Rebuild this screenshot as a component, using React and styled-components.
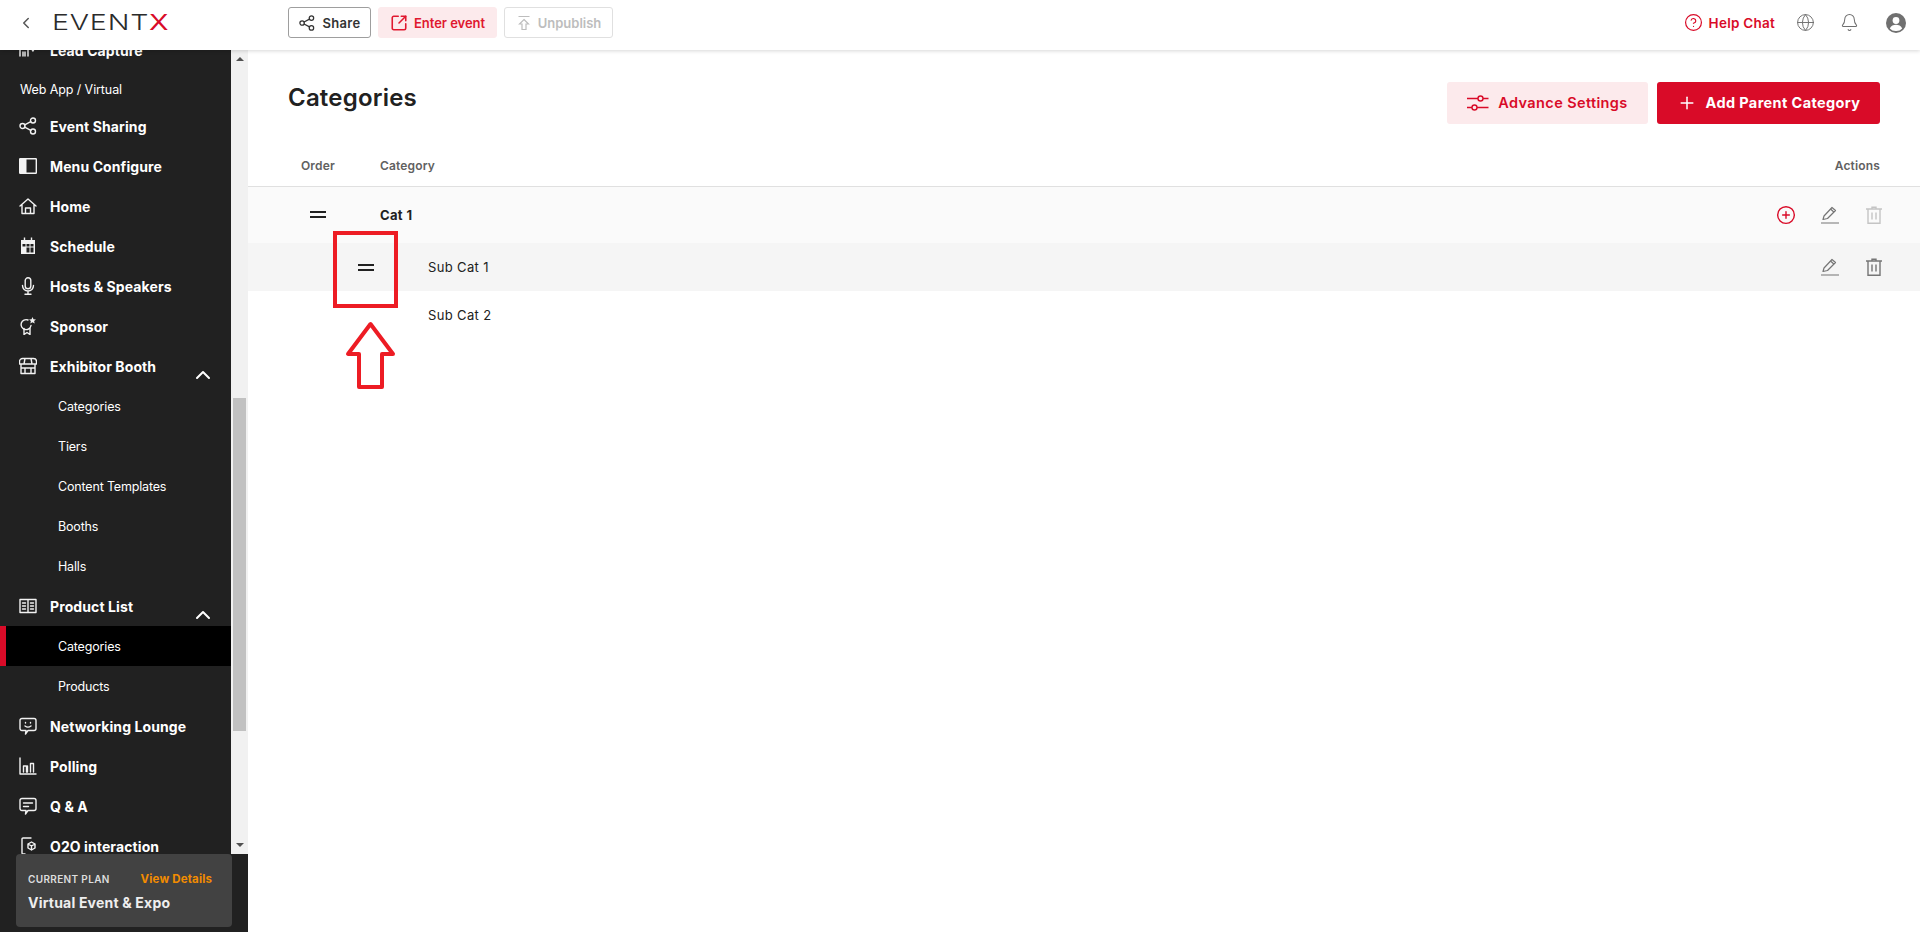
import React from 'react';
import styled, { createGlobalStyle } from 'styled-components';
import { ChevronLeft, ChevronUp, SquareArrowOutUpRight, CircleHelp, Globe, Bell, Plus, CirclePlus } from 'lucide-react';

const Global = createGlobalStyle`
  html, body { margin: 0; padding: 0; height: 100%; background: #fff; }
  body { font-family: Inter, "Noto Sans", Arial, sans-serif; color: #212121; overflow: hidden; }
  * { box-sizing: border-box; }
`;

const Page = styled.div`
  position: relative;
  width: 1920px;
  height: 932px;
  display: grid;
  grid-template-rows: 50px 1fr;
  overflow: hidden;
`;
const Header = styled.header`
  position: relative;
  z-index: 2;
  display: flex;
  align-items: center;
  padding: 0 14px 5px 17px;
  background: #fff;
  box-shadow: 0 1px 4px rgba(0, 0, 0, 0.16);
`;
const Back = styled.span`
  display: flex;
  width: 35px;
  color: #555;
`;
const LogoBox = styled.div`
  width: 236px;
`;
const Logo = styled.div`
  display: inline-block;
  font-family: Inter, sans-serif;
  font-size: 22px;
  line-height: 22px;
  font-weight: 300;
  letter-spacing: 0.6px;
  color: #2b2b2b;
  transform: scaleX(1.3);
  transform-origin: left center;
  span { color: #d90b28; font-weight: 400; }
`;
const TopButton = styled.button`
  display: flex;
  align-items: center;
  justify-content: center;
  gap: ${p => p.$gap || 6}px;
  height: 31px;
  width: ${p => p.$w}px;
  margin-right: ${p => p.$mr}px;
  padding: 0;
  border-radius: 3px;
  font: 600 13px Inter, sans-serif;
  letter-spacing: ${p => p.$ls}px;
  border: 1px solid ${p => p.$border};
  background: ${p => p.$bg};
  color: ${p => p.$color};
`;
const Right = styled.div`
  margin-left: auto;
  display: flex;
  align-items: center;
`;
const Help = styled.div`
  display: flex;
  align-items: center;
  gap: 6px;
  color: #d90b28;
  font-size: 13.5px;
  font-weight: 600;
  letter-spacing: 0.25px;
  margin-right: 21px;
`;
const HeadIcon = styled.span`
  display: flex;
  color: #6f6f6f;
  margin-right: ${p => p.$mr}px;
`;

const Body = styled.div`
  display: grid;
  grid-template-columns: 248px 1fr;
  min-height: 0;
`;
const Side = styled.aside`
  display: grid;
  grid-template-rows: 804px 78px;
  min-height: 0;
`;
const SideTop = styled.div`
  display: grid;
  grid-template-columns: 231px 17px;
  min-height: 0;
  overflow: hidden;
`;
const Nav = styled.nav`
  background: #212121;
  overflow: hidden;
  min-height: 0;
`;
const NavInner = styled.div`
  margin-top: -20px;
`;
const Row = styled.div`
  position: relative;
  display: flex;
  align-items: center;
  height: 40px;
  padding-left: ${p => (p.$sub ? 58 : 19)}px;
  background: ${p => (p.$active ? '#000' : 'transparent')};
  border-left: ${p => (p.$active ? '6px solid #d90b28' : '0')};
  color: #fff;
  font-size: ${p => (p.$sub ? 12.5 : 14)}px;
  font-weight: ${p => (p.$sub ? 400 : 700)};
  letter-spacing: ${p => (p.$sub ? -0.17 : 0.1)}px;
  ${p => p.$active && 'padding-left: 52px;'}
`;
const Group = styled.div`
  padding: 3px 0 0 20px;
  height: 36px;
  display: flex;
  align-items: center;
  font-size: 12.5px;
  color: #fff;
  letter-spacing: -0.1px;
`;
const NavIcon = styled.span`
  display: flex;
  width: 31px;
  flex: none;
  color: #f2f2f2;
`;
const Caret = styled.span`
  position: absolute;
  right: 16px;
  top: 17px;
  display: flex;
`;
const Track = styled.div`
  background: #f1f1f1;
  display: flex;
  flex-direction: column;
  align-items: center;
  padding: 0 2px;
`;
const Arrow = styled.i`
  width: 0;
  height: 0;
  border-left: 4px solid transparent;
  border-right: 4px solid transparent;
  ${p => (p.$down ? 'border-top: 4px solid #505050;' : 'border-bottom: 4px solid #505050;')}
  margin: ${p => (p.$down ? '112px 0 0' : '7px 0 0')};
`;
const Thumb = styled.div`
  width: 13px;
  height: 333px;
  margin-top: 337px;
  background: #c1c1c1;
`;
const Foot = styled.div`
  background: #212121;
  padding: 0 16px 5px;
  height: 78px;
`;
const Plan = styled.div`
  height: 73px;
  background: #424242;
  border-radius: 4px;
  padding: 18px 12px 0;
`;
const PlanTop = styled.div`
  display: flex;
  justify-content: space-between;
  align-items: center;
  padding-right: 8px;
`;
const PlanLabel = styled.span`
  font-size: 10px;
  font-weight: 600;
  letter-spacing: 0.35px;
  color: #ddd;
`;
const PlanLink = styled.span`
  font-size: 11.5px;
  font-weight: 700;
  color: #f28c00;
  letter-spacing: 0.15px;
`;
const PlanName = styled.div`
  margin-top: 8px;
  font-size: 14px;
  font-weight: 700;
  letter-spacing: 0.2px;
  color: #eee;
`;

const Main = styled.main`
  min-width: 0;
  background: #fff;
`;
const TitleBar = styled.div`
  display: flex;
  align-items: flex-start;
  justify-content: space-between;
  padding: 32px 40px 0;
  height: 96px;
`;
const Title = styled.h1`
  margin: 0;
  font-size: 24px;
  line-height: 32px;
  font-weight: 600;
  letter-spacing: 0.2px;
  color: #212121;
`;
const Actions = styled.div`
  display: flex;
  gap: 9px;
`;
const BigButton = styled.button`
  display: flex;
  align-items: center;
  justify-content: center;
  gap: ${p => p.$gap}px;
  width: ${p => p.$w}px;
  height: 42px;
  padding: 0 0 1px;
  border: 0;
  border-radius: 3px;
  background: ${p => p.$bg};
  color: ${p => p.$color};
  font: ${p => p.$weight} 14.5px Inter, sans-serif;
  letter-spacing: 0.38px;
`;
const HeadRow = styled.div`
  height: 41px;
  display: flex;
  align-items: center;
  padding: 0 40px 1px 53px;
  border-bottom: 1px solid #e0e0e0;
  font-size: 12px;
  font-weight: 600;
  color: #616161;
  letter-spacing: 0.15px;
`;
const OrderHead = styled.span`
  width: 79px;
`;
const ActionsHead = styled.span`
  margin-left: auto;
`;
const TableRow = styled.div`
  display: flex;
  align-items: center;
  height: ${p => p.$h}px;
  padding: 0 37px ${p => (p.$bold ? 1 : 0)}px ${p => p.$left}px;
  background: ${p => p.$bg};
  font-size: 13px;
  font-weight: ${p => (p.$bold ? 700 : 400)};
  letter-spacing: 0.35px;
  color: #212121;
`;
const Drag = styled.span`
  display: block;
  width: 16px;
  height: 7px;
  border-top: 2px solid #212121;
  border-bottom: 2px solid #212121;
  margin-right: ${p => p.$mr}px;
  visibility: ${p => (p.$hidden ? 'hidden' : 'visible')};
`;
const RowActions = styled.div`
  margin-left: auto;
  display: flex;
  align-items: center;
`;
const ActionIcon = styled.span`
  display: flex;
  margin-left: ${p => p.$ml || 0}px;
  color: ${p => p.$color || '#757575'};
`;
const Annotation = styled.svg`
  position: absolute;
  left: 330px;
  top: 228px;
  pointer-events: none;
`;

const s = { fill: 'none', stroke: 'currentColor', strokeWidth: 1.4, strokeLinecap: 'round', strokeLinejoin: 'round' };
const Ic = ({ size = 18, children }) => <svg width={size} height={size} viewBox="0 0 18 18" {...s}>{children}</svg>;

const ShareIcon = ({ size = 18 }) => <Ic size={size}><circle cx="3.500" cy="9" r="2.500" /><circle cx="14" cy="3.500" r="2.500" /><circle cx="14" cy="14.500" r="2.500" /><path d="M5.700 7.800l6.100-3.200M5.700 10.200l6.100 3.200" /></Ic>;
const LeadIcon = () => <Ic><circle cx="5" cy="3" r="2" /><path d="M1 15V9.500a2 2 0 0 1 2-2h4a2 2 0 0 1 2 2V15M4 15v-4M6 15v-4M12 7l2 3 2-4" /></Ic>;
const PanelIcon = () => <svg width="18" height="18" viewBox="0 0 18 18"><rect x="0.700" y="1.700" width="16.600" height="14.600" rx="0.500" fill="none" stroke="#f2f2f2" strokeWidth="1.400" /><rect x="1" y="2" width="6.500" height="14" fill="#f2f2f2" /></svg>;
const HomeIcon = () => <Ic><path d="M1 9l8-7 8 7M3 7.500V16.500h12V7.500M6.500 16.500V11h5v5.500" /></Ic>;
const CalIcon = () => <svg width="18" height="18" viewBox="0 0 18 18"><path fill="#f2f2f2" d="M2 3h14v14H2z" /><path d="M5.500 0.500v3M12.500 0.500v3" stroke="#f2f2f2" strokeWidth="1.400" /><path fill="#212121" d="M3.500 7h3v2.500h-3zM7.500 7h3v2.500h-3zM11.500 7h3v2.500h-3zM7.500 10.500h3v5h-3zM11.500 10.500h3v5h-3z" /></svg>;
const MicIcon = () => <Ic><rect x="6.200" y="0.800" width="5.600" height="11" rx="2.800" /><path d="M3.500 8.500a5.500 5.500 0 0 0 11 0M9 14v3.200M6 17.200h6" /></Ic>;
const AwardIcon = () => <Ic><path d="M12 8.500A5 5 0 1 1 9 3" /><path d="M5 11.500v6l3-2 3 2v-6" /><path fill="#f2f2f2" stroke="none" d="M13.500 0l1 2.300 2.500.2-1.900 1.600.6 2.400-2.200-1.300-2.200 1.300.6-2.400L10 2.500l2.500-.2z" /></Ic>;
const StoreIcon = () => <Ic><path d="M3.500 1.500h11a3 3 0 0 1 3 3V7H.5V4.500a3 3 0 0 1 3-3zM6 1.500L5 7M12 1.500L13 7M2 7v9.500h14V7M6 16.500V11h6v5.500M2 11h14" /></Ic>;
const BookIcon = () => <Ic><path d="M1 2.500h16v13H1zM9 2.500v13M3.500 6h3M3.500 9h3M3.500 12h3M11.500 6h3M11.500 9h3M11.500 12h3" /></Ic>;
const ChatSmile = () => <Ic><path d="M3 1.500h12a2 2 0 0 1 2 2v8a2 2 0 0 1-2 2H9l-2.500 3.500.5-3.500H3a2 2 0 0 1-2-2v-8a2 2 0 0 1 2-2z" /><path d="M6 9c2 1.500 4 1.500 6 0M6.500 5.500v.5M11.500 5.500v.5" /></Ic>;
const BarsIcon = () => <Ic><path d="M1 1v16h16M4.500 15V9h3v6M8.500 15V9M11.500 15V6.500h3V15" /></Ic>;
const ChatLines = () => <Ic><path d="M3 1.500h12a2 2 0 0 1 2 2v8a2 2 0 0 1-2 2H9l-2.500 3.500.5-3.500H3a2 2 0 0 1-2-2v-8a2 2 0 0 1 2-2zM4.500 6h9M4.500 9.500h5" /></Ic>;
const O2OIcon = () => <Ic><path d="M6 17H4a1 1 0 0 1-1-1V2a1 1 0 0 1 1-1h8M12.500 5l3.500 2v4l-3.500 2L9 11V7zM9 7l3.500 2L16 7M12.500 9v4" /></Ic>;
const Unpublish = () => <svg width="16" height="16" viewBox="0 0 16 16" fill="none" stroke="#bdbdbd" strokeWidth="1.200"><path d="M2.500 1.500h11M8 4.500l4.500 4.500H10v5.500H6V9H3.500z" /></svg>;
const Avatar = () => <svg width="20" height="20" viewBox="0 0 20 20"><circle cx="10" cy="10" r="10" fill="#707070" /><circle cx="10" cy="7.500" r="3.400" fill="#fff" /><path d="M3.800 15.500c1-2.800 3.800-3.800 6.200-3.800s5.200 1 6.200 3.800A8 8 0 0 1 10 18a8 8 0 0 1-6.200-2.500z" fill="#fff" /></svg>;
const Sliders = () => <svg width="22" height="22" viewBox="0 0 22 22" fill="none" stroke="currentColor" strokeWidth="1.400"><path d="M0 6.500h11M16 6.500h5.500M0 15.500h5M10 15.500h11.500" /><circle cx="13.500" cy="6.500" r="2.500" /><circle cx="7.500" cy="15.500" r="2.500" /></svg>;
const PenLine = () => <svg width="18" height="18" viewBox="0 0 18 18" fill="none" stroke="currentColor" strokeWidth="1.200" strokeLinejoin="round"><path d="M0 17h18M2 13.500l1-3.500L11 1.500l3.500 3-8 8z" /><path d="M9.500 3l3.300 3" /></svg>;
const Trash = () => <svg width="18" height="18" viewBox="0 0 18 18" fill="none" stroke="currentColor" strokeWidth="1.400"><path d="M1 3h16M7 3V1.300h4V3M3 3v14.300h12V3M7 6.500v7M11 6.500v7" /></svg>;

const mid = [
  ['Event Sharing', <ShareIcon />],
  ['Menu Configure', <PanelIcon />],
  ['Home', <HomeIcon />],
  ['Schedule', <CalIcon />],
  ['Hosts & Speakers', <MicIcon />],
  ['Sponsor', <AwardIcon />],
];
const rest = [
  ['Networking Lounge', <ChatSmile />],
  ['Polling', <BarsIcon />],
  ['Q & A', <ChatLines />],
  ['O2O interaction', <O2OIcon />],
];

const NavItem = ({ label, icon, open }) => (
  <Row>
    <NavIcon>{icon}</NavIcon>
    {label}
    {open && <Caret><ChevronUp size={24} strokeWidth={2} /></Caret>}
  </Row>
);

export default function App() {
  return (
    <Page>
      <Global />
      <Header>
        <Back><ChevronLeft size={18} strokeWidth={2} /></Back>
        <LogoBox><Logo>EVENT<span>X</span></Logo></LogoBox>
        <TopButton $w={83} $mr={7} $ls={0.3} $gap={8} $border="#9e9e9e" $bg="#fff" $color="#333">
          <ShareIcon size={16} />Share
        </TopButton>
        <TopButton $w={119} $mr={7} $ls={-0.05} $gap={6} $border="#fceaec" $bg="#fceaec" $color="#e0182f">
          <SquareArrowOutUpRight size={18} strokeWidth={2.1} />Enter event
        </TopButton>
        <TopButton $w={109} $mr={0} $ls={0} $gap={6} $border="#e0e0e0" $bg="#fff" $color="#bdbdbd">
          <Unpublish />Unpublish
        </TopButton>
        <Right>
          <Help><CircleHelp size={19} strokeWidth={1.5} />Help Chat</Help>
          <HeadIcon $mr={25}><Globe size={19} strokeWidth={1.2} /></HeadIcon>
          <HeadIcon $mr={27}><Bell size={19} strokeWidth={1.3} /></HeadIcon>
          <HeadIcon $mr={0}><Avatar /></HeadIcon>
        </Right>
      </Header>
      <Body>
        <Side>
          <SideTop>
            <Nav>
              <NavInner>
                <NavItem label="Lead Capture" icon={<LeadIcon />} />
                <Group>Web App / Virtual</Group>
                {mid.map(([l, i]) => <NavItem key={l} label={l} icon={i} />)}
                <NavItem label="Exhibitor Booth" icon={<StoreIcon />} open />
                <Row $sub>Categories</Row>
                <Row $sub>Tiers</Row>
                <Row $sub>Content Templates</Row>
                <Row $sub>Booths</Row>
                <Row $sub>Halls</Row>
                <NavItem label="Product List" icon={<BookIcon />} open />
                <Row $sub $active>Categories</Row>
                <Row $sub>Products</Row>
                {rest.map(([l, i]) => <NavItem key={l} label={l} icon={i} />)}
              </NavInner>
            </Nav>
            <Track>
              <Arrow />
              <Thumb />
              <Arrow $down />
            </Track>
          </SideTop>
          <Foot>
            <Plan>
              <PlanTop>
                <PlanLabel>CURRENT PLAN</PlanLabel>
                <PlanLink>View Details</PlanLink>
              </PlanTop>
              <PlanName>Virtual Event &amp; Expo</PlanName>
            </Plan>
          </Foot>
        </Side>
        <Main>
          <TitleBar>
            <Title>Categories</Title>
            <Actions>
              <BigButton $w={201} $gap={9} $bg="#fceaec" $color="#d90b28" $weight={600}><Sliders />Advance Settings</BigButton>
              <BigButton $w={223} $gap={9} $bg="#d90b28" $color="#fff" $weight={700}><Plus size={20} strokeWidth={1.8} />Add Parent Category</BigButton>
            </Actions>
          </TitleBar>
          <HeadRow>
            <OrderHead>Order</OrderHead>
            <span>Category</span>
            <ActionsHead>Actions</ActionsHead>
          </HeadRow>
          <TableRow $h={56} $left={62} $bg="#fafafa" $bold>
            <Drag $mr={54} />Cat 1
            <RowActions>
              <ActionIcon $color="#d90b28"><CirclePlus size={20} strokeWidth={1.7} /></ActionIcon>
              <ActionIcon $ml={25}><PenLine /></ActionIcon>
              <ActionIcon $ml={26} $color="#c4c4c4"><Trash /></ActionIcon>
            </RowActions>
          </TableRow>
          <TableRow $h={48} $left={110} $bg="#f5f5f5">
            <Drag $mr={54} />Sub Cat 1
            <RowActions>
              <ActionIcon><PenLine /></ActionIcon>
              <ActionIcon $ml={26}><Trash /></ActionIcon>
            </RowActions>
          </TableRow>
          <TableRow $h={48} $left={110} $bg="#fff">
            <Drag $mr={54} $hidden />Sub Cat 2
          </TableRow>
        </Main>
      </Body>
      <Annotation width="72" height="166" viewBox="0 0 72 166" fill="none" stroke="#ed1c24" strokeWidth="4">
        <rect x="5" y="5" width="61" height="73" />
        <path strokeLinejoin="round" d="M40.500 96L18 126h11v33h23v-33h11z" />
      </Annotation>
    </Page>
  );
}
